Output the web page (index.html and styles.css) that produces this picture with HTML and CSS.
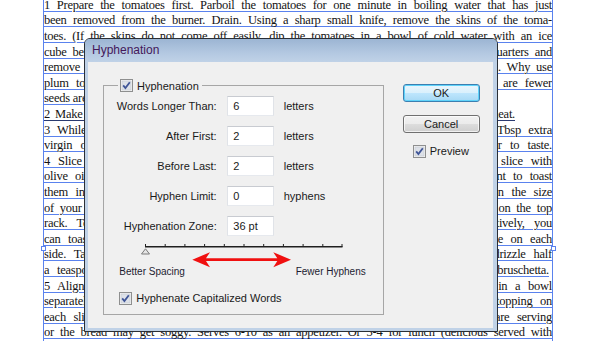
FILE: index.html
```html
<!DOCTYPE html>
<html lang="en">
<head>
    <meta charset="UTF-8">
    <title>Hyphenation</title>
    <link rel="stylesheet" href="styles.css">
</head>
<body>
<div class="page">
    <div class="frame">
        <div class="ln">1 Prepare the tomatoes first. Parboil the tomatoes for one minute in boiling water that has just</div>
        <div class="ln">been removed from the burner. Drain. Using a sharp small knife, remove the skins of the toma-</div>
        <div class="ln">toes. (If the skins do not come off easily, dip the tomatoes in a bowl of cold water with an ice</div>
        <div class="ln">cube beforehand.) Remove the stems and cut the ripe tomatoes in half, then cut into quarters and</div>
        <div class="ln">remove the seeds and the pulp. Cut the flesh into small cubes and put them in a bowl. Why use</div>
        <div class="ln">plum tomatoes? They have more flesh and less juice than tomatoes, and their seeds are fewer</div>
        <div class="ln end">seeds are easy to remove.)</div>
        <div class="ln end eat">2 Make the topping. Mix the diced tomatoes with the chopped basil and garlic. Do not heat.</div>
        <div class="ln">3 While the tomatoes are marinating, whisk together in a small bowl the garlic, 2 Tbsp extra</div>
        <div class="ln">virgin olive oil, the balsamic vinegar, a pinch of sugar, and some salt and pepper to taste.</div>
        <div class="ln">4 Slice the baguette on the diagonal into inch thick slices. Coat the top of each slice with</div>
        <div class="ln">olive oil using a pastry brush. Toast the slices in the oven or a toaster. If you want to toast</div>
        <div class="ln">them in the oven, it will take about 5 to 6 minutes at 450°F, mostly depending on the size</div>
        <div class="ln">of your slices. Place the slices on a baking sheet and put them on the middle rack or on the top</div>
        <div class="ln">rack. Toast them until they are lightly browned and crisp at the edges. Alternatively, you</div>
        <div class="ln">can toast them in a toaster oven or on a hot cast-iron grill pan for about a minute on each</div>
        <div class="ln">side. Take a peeled garlic clove, rub it on one side of each slice of bread and drizzle half</div>
        <div class="ln end brus">a teaspoon of olive oil on each slice. Spoon the tomato mixture on the slices of bruschetta.</div>
        <div class="ln">5 Align the toasted bread on a large serving platter. Put the fresh tomato topping in a bowl</div>
        <div class="ln">separately and let each of your guests spoon the fresh marinated tomato and basil topping on</div>
        <div class="ln">each slice. Add the topping to the slices of bread only at the last minute if you are serving</div>
        <div class="ln">or the bread may get soggy. Serves 6-10 as an appetizer. Or 3-4 for lunch (delicious served with</div>
        <span class="handle handle-left"></span>
        <span class="handle handle-right"></span>
    </div>

    <div class="dialog">
        <div class="titlebar">Hyphenation</div>
        <div class="client">
            <fieldset class="group">
                <legend>
                    <svg class="cb" viewBox="0 0 13 13"><rect x="0.5" y="0.5" width="12" height="12" fill="#f4f4f4" stroke="#8e8f8f"/><rect x="2" y="2" width="9" height="9" fill="#dde1e8" stroke="#c4c8d0" stroke-width="0.6"/><path d="M3.2 6.4 L5.4 9 L9.8 3.2" fill="none" stroke="#3f5597" stroke-width="1.8"/></svg>
                    Hyphenation
                </legend>
                <div class="fields">
                    <span class="lbl">Words Longer Than:</span><input class="num" type="text" value="6" readonly><span class="unit">letters</span>
                    <span class="lbl">After First:</span><input class="num" type="text" value="2" readonly><span class="unit">letters</span>
                    <span class="lbl">Before Last:</span><input class="num" type="text" value="2" readonly><span class="unit">letters</span>
                    <span class="lbl">Hyphen Limit:</span><input class="num" type="text" value="0" readonly><span class="unit">hyphens</span>
                    <span class="lbl">Hyphenation Zone:</span><input class="num" type="text" value="36 pt" readonly><span class="unit"></span>
                </div>
                <div class="slider">
                    <svg width="210" height="27" viewBox="0 0 210 27">
                        <line x1="5" y1="4.7" x2="202.5" y2="4.7" stroke="#202020" stroke-width="1.6"/>
                        <g stroke="#202020" stroke-width="1">
                            <line x1="5.5" y1="2" x2="5.5" y2="5"/>
                            <line x1="25.2" y1="2" x2="25.2" y2="5"/>
                            <line x1="44.9" y1="2" x2="44.9" y2="5"/>
                            <line x1="64.6" y1="2" x2="64.6" y2="5"/>
                            <line x1="84.3" y1="2" x2="84.3" y2="5"/>
                            <line x1="104" y1="2" x2="104" y2="5"/>
                            <line x1="123.7" y1="2" x2="123.7" y2="5"/>
                            <line x1="143.4" y1="2" x2="143.4" y2="5"/>
                            <line x1="163.1" y1="2" x2="163.1" y2="5"/>
                            <line x1="182.8" y1="2" x2="182.8" y2="5"/>
                            <line x1="202" y1="2" x2="202" y2="5"/>
                        </g>
                        <polygon points="1.5,12 9.5,12 5.5,6.8" fill="#e6e6e6" stroke="#7a7a7a" stroke-width="1"/>
                        <path d="M52.3 17.7 L70 10.2 L66 16.3 L137.3 16.3 L133.3 10.2 L151 17.7 L133.3 25.2 L137.3 19.1 L66 19.1 L70 25.2 Z" fill="#f01010"/>
                    </svg>
                </div>
                <div class="scale">
                    <span class="scale-left">Better Spacing</span>
                    <span class="scale-right">Fewer Hyphens</span>
                </div>
                <label class="check-row caps">
                    <svg class="cb" viewBox="0 0 13 13"><rect x="0.5" y="0.5" width="12" height="12" fill="#f4f4f4" stroke="#8e8f8f"/><rect x="2" y="2" width="9" height="9" fill="#dde1e8" stroke="#c4c8d0" stroke-width="0.6"/><path d="M3.2 6.4 L5.4 9 L9.8 3.2" fill="none" stroke="#3f5597" stroke-width="1.8"/></svg>
                    Hyphenate Capitalized Words
                </label>
            </fieldset>
            <div class="side">
                <button class="btn btn-default">OK</button>
                <button class="btn">Cancel</button>
                <label class="check-row preview">
                    <svg class="cb" viewBox="0 0 13 13"><rect x="0.5" y="0.5" width="12" height="12" fill="#f4f4f4" stroke="#8e8f8f"/><rect x="2" y="2" width="9" height="9" fill="#dde1e8" stroke="#c4c8d0" stroke-width="0.6"/><path d="M3.2 6.4 L5.4 9 L9.8 3.2" fill="none" stroke="#3f5597" stroke-width="1.8"/></svg>
                    Preview
                </label>
            </div>
        </div>
    </div>
</div>
</body>
</html>
```

FILE: styles.css
```css
body {
    margin: 0;
    background: #fff;
    overflow: hidden;
}
.page {
    position: relative;
    width: 600px;
    height: 342px;
    overflow: hidden;
}

/* text frame behind the dialog */
.frame {
    position: relative;
    margin: -2.2px 0 0 43px;
    width: 508px;
    border-left: 1px solid #5a82ee;
    border-right: 1px solid #5a82ee;
    font: 12.5px/15.6px "Liberation Serif", serif;
    color: #141414;
}
.ln {
    height: 15.6px;
    overflow: hidden;
    letter-spacing: -0.25px;
    text-align: justify;
    text-align-last: justify;
    text-decoration: underline;
    text-decoration-color: #5a82ee;
    text-decoration-thickness: 1px;
    text-underline-offset: 2px;
}
.ln.end {
    text-align: left;
    text-align-last: left;
}
.ln.eat {
    width: 471px;
    text-align-last: justify;
    text-decoration-color: #2a3a70;
}
.ln.brus {
    width: 505px;
    text-align-last: justify;
}
.handle {
    position: absolute;
    width: 5px;
    height: 5px;
    box-sizing: border-box;
    background: #fff;
    border: 1px solid #5a82ee;
    top: 248px;
}
.handle-left { left: -3.5px; }
.handle-right { right: -3.5px; }

/* dialog */
.dialog {
    position: absolute;
    left: 84px;
    top: 38px;
    width: 414px;
    height: 294px;
    box-sizing: border-box;
    border: 1px solid #2a2f36;
    border-radius: 6px 6px 0 0;
    background: #c0d2e7;
    display: flex;
    flex-direction: column;
    font: 10.5px "Liberation Sans", Arial, sans-serif;
    color: #1a1a1a;
}
.titlebar {
    height: 23px;
    line-height: 23px;
    padding-left: 7px;
    border-radius: 5px 5px 0 0;
    background: linear-gradient(#9cb5d3, #b3c8e1 60%, #c0d2e7);
    font-size: 12px;
    color: #44185a;
}
.client {
    flex: 1;
    margin: 0 4px 3px 3px;
    background: #f0f0f0;
    display: flex;
    align-items: flex-start;
    padding: 17px 0 0 15px;
}
.group {
    margin: 0;
    width: 281px;
    box-sizing: border-box;
    padding: 4px 0 9px 0;
    border: 1px solid #a6a6a6;
}
.group legend {
    margin-left: 14px;
    padding: 0 3px 0 2px;
    display: flex;
    align-items: center;
    gap: 4px;
    height: 13px;
    font-size: 11px;
}
.cb {
    width: 13px;
    height: 13px;
    display: block;
    flex: none;
}
.fields {
    display: grid;
    grid-template-columns: 112.7px 47px auto;
    column-gap: 10px;
    row-gap: 10px;
    align-items: center;
}
.lbl {
    text-align: right;
    font-size: 11px;
}
.unit {
    font-size: 11px;
}
.num {
    width: 47px;
    height: 20px;
    margin-left: 0.6px;
    box-sizing: border-box;
    padding: 0 0 0 5px;
    border: 1px solid;
    border-color: #c8cbd1 #e0e3e8 #e6e9ee #e0e3e8;
    background: #fff;
    font: 11px "Liberation Sans", Arial, sans-serif;
    color: #1a1a1a;
    outline: none;
}
.slider {
    margin: 6px 0 0 36px;
    height: 27px;
}
.slider svg {
    display: block;
}
.scale {
    display: flex;
    margin: -3px 0 0 15.3px;
    font-size: 10px;
    line-height: 12px;
    color: #1c1c30;
}
.scale-left {
    width: 176.4px;
}
.check-row {
    display: flex;
    align-items: center;
    gap: 4px;
    font-size: 11px;
    line-height: 13px;
}
.caps {
    margin: 13.5px 0 0 15.3px;
}
.side {
    margin: 5.3px 0 0 18.7px;
    display: flex;
    flex-direction: column;
    gap: 12.6px;
    width: 77px;
}
.btn {
    width: 77px;
    height: 18px;
    padding: 0;
    border: 1px solid #707070;
    border-radius: 3px;
    background: linear-gradient(#f2f2f2, #ebebeb 50%, #dddddd 50%, #cfcfcf);
    box-shadow: inset 0 0 0 1px rgba(255, 255, 255, 0.7);
    font: 11px "Liberation Sans", Arial, sans-serif;
    color: #1a1a1a;
}
.btn-default {
    border-color: #3c7fb1;
    background: linear-gradient(#eaf6fd, #d9f0fc 50%, #bee6fd 50%, #a7d9f5);
    box-shadow: inset 0 0 0 1px #5fd3fa;
}
.preview {
    margin-left: 10.6px;
    gap: 3.5px;
}
```
